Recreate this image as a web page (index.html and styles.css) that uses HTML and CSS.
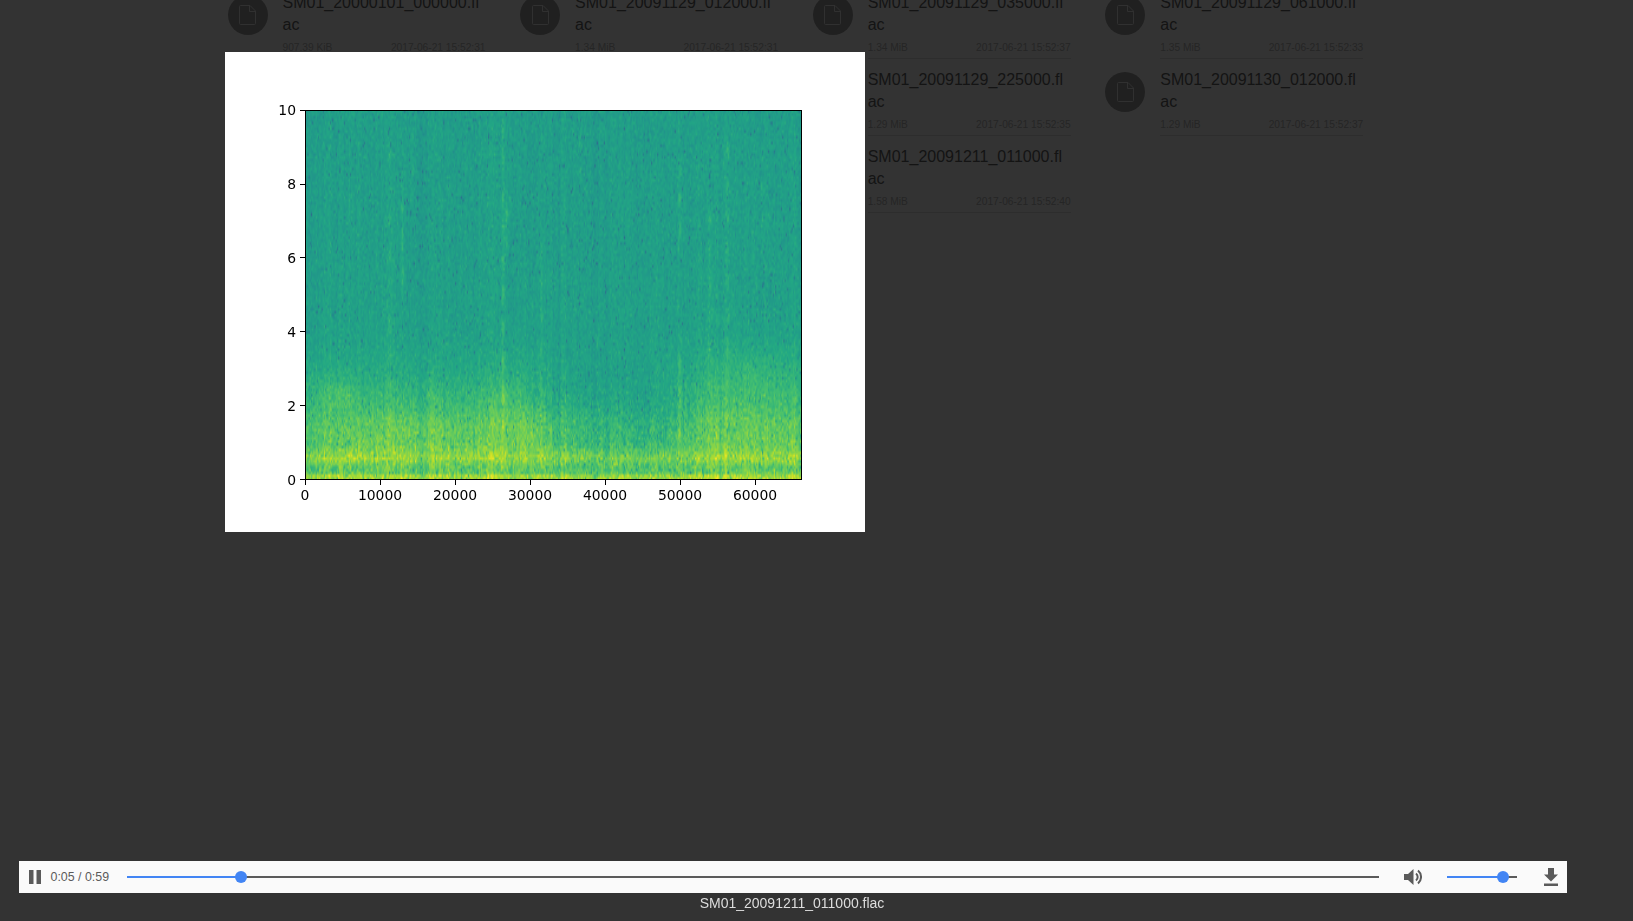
FILE: index.html
```html
<!DOCTYPE html>
<html lang="en">
<head>
    <meta charset="UTF-8">
    <meta name="viewport" content="width=device-width, initial-scale=1.0">
    <title>SM01_20091211_011000.flac</title>
    <link rel="stylesheet" href="styles.css">
</head>
<body>
    <svg class="defs" width="0" height="0">
        <symbol id="file-icon" viewBox="0 0 17 20">
            <path d="M1.500 .5h9.500l5.500 5.500v12.500a1 1 0 0 1-1 1h-14a1 1 0 0 1-1-1v-17a1 1 0 0 1 1-1z"/>
            <path d="M10.500 .5v6h6"/>
        </symbol>
    </svg>

    <main class="file-list">
        <div class="file">
            <span class="file-badge"><svg class="file-icon"><use href="#file-icon"/></svg></span>
            <div class="file-info">
                <div class="file-name">SM01_20000101_000000.flac</div>
                <div class="file-meta"><span>907.39 KiB</span><span>2017-06-21 15:52:31</span></div>
            </div>
        </div>
        <div class="file">
            <span class="file-badge"><svg class="file-icon"><use href="#file-icon"/></svg></span>
            <div class="file-info">
                <div class="file-name">SM01_20091129_012000.flac</div>
                <div class="file-meta"><span>1.34 MiB</span><span>2017-06-21 15:52:31</span></div>
            </div>
        </div>
        <div class="file">
            <span class="file-badge"><svg class="file-icon"><use href="#file-icon"/></svg></span>
            <div class="file-info">
                <div class="file-name">SM01_20091129_035000.flac</div>
                <div class="file-meta"><span>1.34 MiB</span><span>2017-06-21 15:52:37</span></div>
            </div>
        </div>
        <div class="file">
            <span class="file-badge"><svg class="file-icon"><use href="#file-icon"/></svg></span>
            <div class="file-info">
                <div class="file-name">SM01_20091129_061000.flac</div>
                <div class="file-meta"><span>1.35 MiB</span><span>2017-06-21 15:52:33</span></div>
            </div>
        </div>
        <div class="file col-3">
            <span class="file-badge"><svg class="file-icon"><use href="#file-icon"/></svg></span>
            <div class="file-info">
                <div class="file-name">SM01_20091129_225000.flac</div>
                <div class="file-meta"><span>1.29 MiB</span><span>2017-06-21 15:52:35</span></div>
            </div>
        </div>
        <div class="file">
            <span class="file-badge"><svg class="file-icon"><use href="#file-icon"/></svg></span>
            <div class="file-info">
                <div class="file-name">SM01_20091130_012000.flac</div>
                <div class="file-meta"><span>1.29 MiB</span><span>2017-06-21 15:52:37</span></div>
            </div>
        </div>
        <div class="file col-3">
            <span class="file-badge"><svg class="file-icon"><use href="#file-icon"/></svg></span>
            <div class="file-info">
                <div class="file-name">SM01_20091211_011000.flac</div>
                <div class="file-meta"><span>1.58 MiB</span><span>2017-06-21 15:52:40</span></div>
            </div>
        </div>
    </main>

    <div class="viewer">
        <figure class="plot">
            <canvas id="spectrogram" width="496" height="370"></canvas>
            <svg class="axes" width="640" height="480" viewBox="0 0 640 480">
                <rect class="frame" x="80.500" y="58.500" width="496" height="369"/>
                <path class="ticks" d="M75 427.500h5M75 353.500h5M75 279.500h5M75 205.500h5M75 132.500h5M75 58.500h5M80.500 428v5M155.500 428v5M230.500 428v5M305.500 428v5M380.500 428v5M455.500 428v5M530.500 428v5"/>
                <g class="y-labels">
                    <text x="71" y="432.500">0</text>
                    <text x="71" y="358.500">2</text>
                    <text x="71" y="284.500">4</text>
                    <text x="71" y="210.500">6</text>
                    <text x="71" y="137">8</text>
                    <text x="71" y="63">10</text>
                </g>
                <g class="x-labels">
                    <text x="80" y="448">0</text>
                    <text x="155" y="448">10000</text>
                    <text x="230" y="448">20000</text>
                    <text x="305" y="448">30000</text>
                    <text x="380" y="448">40000</text>
                    <text x="455" y="448">50000</text>
                    <text x="530" y="448">60000</text>
                </g>
            </svg>
        </figure>

        <div class="player">
            <svg class="pause" width="12" height="14" viewBox="0 0 12 14"><path d="M0 0h4.500v14H0zM7.500 0H12v14H7.500z"/></svg>
            <span class="time">0:05 / 0:59</span>
            <div class="slider seek"><div class="fill" style="width: 9.1%"></div></div>
            <svg class="volume" width="18" height="18" viewBox="0 0 18 18">
                <path d="M0 6h4l5.500-5v16L4 12H0z"/>
                <path class="wave" d="M12 5.500a4.500 4.500 0 0 1 0 7M14 2.500a8.500 8.500 0 0 1 0 13"/>
            </svg>
            <div class="slider vol"><div class="fill" style="width: 80%"></div></div>
            <svg class="download" width="14" height="18" viewBox="0 0 14 18"><path d="M4 0h6v6.500h4L7 13.500 0 6.500h4zM0 15.500h14V18H0z"/></svg>
        </div>
        <div class="caption">SM01_20091211_011000.flac</div>
    </div>

    <script src="spectrogram.js"></script>
</body>
</html>
```

FILE: styles.css
```css
html, body { margin: 0; height: 100%; overflow: hidden; }
body { font-family: "Liberation Sans", Arial, sans-serif; background: #fff; }
.defs { position: absolute; }

.file-list { display: grid; grid-template-columns: repeat(4, 292.6px); margin: -18px 0 0 227.5px; }
.file { display: flex; gap: 15px; padding-top: 10px; }
.col-3 { grid-column-start: 3; }
.file-badge { flex: none; display: flex; align-items: center; justify-content: center; width: 40px; height: 40px; margin-top: 3px; border-radius: 50%; background: #a0a0a0; }
.file-icon { width: 17px; height: 20px; fill: none; stroke: #eee; stroke-width: 1; }
.file-info { width: 203px; padding-bottom: 4px; border-bottom: 1px solid #e0e0e0; }
.file-name { font-size: 16px; line-height: 22px; color: #666; word-break: break-all; }
.file-meta { display: flex; justify-content: space-between; margin-top: 5px; font-size: 10.2px; line-height: 13px; color: #b8b8b8; }

/* lightbox over the file list */
.viewer { position: fixed; inset: 0; display: flex; flex-direction: column; background: rgba(0, 0, 0, 0.8); }

.plot { position: relative; width: 640px; height: 480px; margin: 52px 0 0 225px; background: #fff; }
.plot canvas { position: absolute; left: 80px; top: 58px; }
.axes { position: absolute; left: 0; top: 0; }
.frame { fill: none; stroke: #000; stroke-width: 1; }
.ticks { fill: none; stroke: #000; stroke-width: 1; }
.axes text { font-family: "DejaVu Sans", sans-serif; font-size: 13.9px; fill: #000; }
.y-labels text { text-anchor: end; }
.x-labels text { text-anchor: middle; }

.player { display: flex; align-items: center; height: 32px; margin: auto 66px 0 19px; padding: 0 9px 0 10px; background: #fafafa; }
.pause { flex: none; fill: #5a5a5a; }
.time { margin: 0 18px 0 9.5px; font-size: 12.4px; color: #5a5a5a; white-space: nowrap; }
.slider { position: relative; height: 2px; background: #5a5a5a; }
.seek { flex: 1; }
.vol { flex: none; width: 70px; }
.fill { position: relative; height: 100%; background: #4285f4; }
.fill::after { content: ""; position: absolute; right: -6px; top: -5px; width: 12px; height: 12px; border-radius: 50%; background: #4285f4; }
.volume { flex: none; margin: 0 25px; fill: #5a5a5a; }
.volume .wave { fill: none; stroke: #5a5a5a; stroke-width: 2; }
.download { flex: none; margin-left: 27px; fill: #5a5a5a; }

.caption { height: 28px; margin: 0 66px 0 17px; font-size: 14px; line-height: 21px; color: #ddd; text-align: center; }
```

FILE: spectrogram.js
```js
// draws the spectrogram picture: time goes left to right, 0-10 kHz bottom to top
const canvas = document.getElementById("spectrogram");
const ctx = canvas.getContext("2d");

const cols = 420;
const rows = 129;
const maxTime = 66150;

const viridis = [
    [68, 1, 84], [72, 36, 117], [65, 68, 135], [53, 95, 141], [42, 120, 142], [33, 145, 140],
    [34, 168, 132], [68, 191, 112], [122, 209, 81], [189, 223, 38], [253, 231, 37]
];

// [frequency, level] of the quiet background
const profile = [
    [0, 0.84], [0.1, 0.88], [0.2, 0.74], [0.35, 0.74], [0.6, 0.84], [0.8, 0.78], [1, 0.74],
    [1.5, 0.72], [2, 0.665], [3, 0.6], [4, 0.57], [6, 0.56], [10, 0.555]
];

// [time, width, strength, lowest freq, highest freq]
const streaks = [
    [11300, 220, 0.06, 1, 9], [13000, 180, 0.07, 5, 8], [14300, 180, 0.06, 7.500, 9.500],
    [17000, 500, 0.03, 0.5, 3], [26400, 200, 0.09, 0.5, 10], [26900, 220, 0.1, 6.300, 7.800],
    [27400, 180, 0.05, 7, 10], [31500, 220, 0.05, 0, 6.500], [36700, 200, 0.05, 8, 9.500],
    [39000, 220, 0.06, 2, 4], [50000, 160, 0.11, 1, 3.800], [50000, 160, 0.1, 6.300, 8.500],
    [54000, 260, 0.07, 1, 7.500], [56400, 200, 0.08, 1.500, 9.500], [61000, 200, 0.06, 6, 9]
];

// [centre time, half width, centre freq, half height, change]
const patches = [
    [27500, 2800, 1.800, 1.200, 0.06], [30000, 1500, 1.300, 0.5, 0.05],
    [15000, 9000, 1.400, 0.9, 0.035], [40000, 8000, 2.000, 1.300, -0.06],
    [47000, 4000, 1.500, 1.000, -0.05], [60000, 6500, 2.000, 1.300, 0.04],
    [60000, 6500, 3.000, 0.6, 0.025], [3000, 3000, 2.400, 0.6, 0.03], [5500, 1500, 2.300, 0.3, 0.04],
    [42000, 8000, 0.9, 0.5, -0.03]
];

let seed = 20091211;
function random() {
    seed = (seed + 0x6d2b79f5) | 0;
    let t = Math.imul(seed ^ (seed >>> 15), 1 | seed);
    t = (t + Math.imul(t ^ (t >>> 7), 61 | t)) ^ t;
    return ((t ^ (t >>> 14)) >>> 0) / 4294967296;
}

function gauss() {
    return (random() + random() + random() - 1.5) / 0.5;
}

function baseLevel(freq) {
    for (let i = 1; i < profile.length; i++) {
        if (freq <= profile[i][0]) {
            const a = profile[i - 1];
            const b = profile[i];
            return a[1] + (b[1] - a[1]) * (freq - a[0]) / (b[0] - a[0]);
        }
    }
    return profile[profile.length - 1][1];
}

function soft(edge, value, width) {
    return Math.max(0, Math.min(1, (value - edge) / width + 0.5));
}

function colour(level) {
    const pos = Math.max(0, Math.min(0.999, level)) * 10;
    const i = Math.floor(pos);
    const f = pos - i;
    return viridis[i].map((c, k) => c + (viridis[i + 1][k] - c) * f);
}

// per column loudness, correlated a little between neighbours
const columnNoise = [];
let last = 0;
for (let x = 0; x < cols; x++) {
    last = last * 0.6 + gauss() * 0.4;
    columnNoise.push(last);
}

const buffer = document.createElement("canvas");
buffer.width = cols;
buffer.height = rows;
const bufferCtx = buffer.getContext("2d");
const pixels = bufferCtx.createImageData(cols, rows);

for (let x = 0; x < cols; x++) {
    const time = (x + 0.5) / cols * maxTime;
    for (let y = 0; y < rows; y++) {
        const freq = (rows - 1 - y + 0.5) / rows * 10;
        let level = baseLevel(freq);

        patches.forEach(([t0, tw, f0, fh, change]) => {
            const dt = (time - t0) / tw;
            const df = (freq - f0) / fh;
            level += change * Math.exp(-(dt * dt + df * df));
        });

        streaks.forEach(([t0, width, strength, low, high]) => {
            const dt = (time - t0) / width;
            if (Math.abs(dt) < 4) {
                const wobble = 0.6 + 0.4 * Math.sin(freq * 7 + t0);
                level += strength * wobble * Math.exp(-dt * dt) * soft(low, freq, 0.5) * (1 - soft(high, freq, 0.5));
            }
        });

        // low end is busier than the top
        const busy = freq < 3 ? 1 - freq / 3 : 0;
        level += columnNoise[x] * (0.02 + 0.035 * busy);
        level += gauss() * (0.025 + 0.03 * busy);
        if (random() < 0.03) {
            level -= 0.07 + random() * 0.1;
        }

        const [r, g, b] = colour(level);
        const i = (y * cols + x) * 4;
        pixels.data[i] = r;
        pixels.data[i + 1] = g;
        pixels.data[i + 2] = b;
        pixels.data[i + 3] = 255;
    }
}

bufferCtx.putImageData(pixels, 0, 0);
ctx.imageSmoothingEnabled = true;
ctx.drawImage(buffer, 0, 0, canvas.width, canvas.height);
```
